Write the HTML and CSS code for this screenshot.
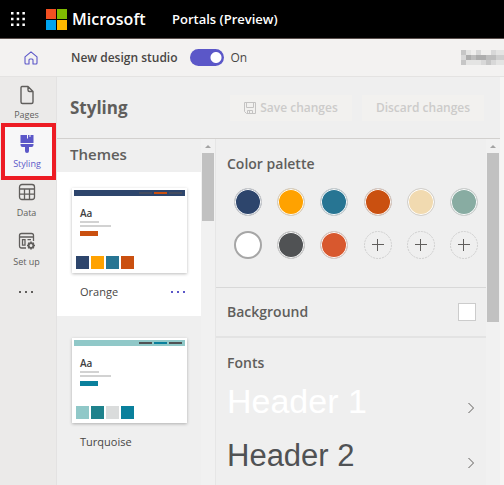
FILE: index.html
```html
<!DOCTYPE html>
<html lang="en">
<head>
<meta charset="utf-8">
<title>Portals (Preview)</title>
<link rel="stylesheet" href="styles.css">
</head>
<body>
<header class="topbar">
  <button class="waffle" aria-label="App launcher">
    <svg width="14" height="14" viewBox="0 0 14 14" fill="#fff"><path d="M0 0h2.500v2.500H0zM5.700 0h2.500v2.500H5.700zM11.400 0h2.500v2.500h-2.500zM0 5.700h2.500v2.500H0zM5.700 5.700h2.500v2.500H5.700zM11.400 5.700h2.500v2.500h-2.500zM0 11.400h2.500v2.500H0zM5.700 11.400h2.500v2.500H5.700zM11.400 11.400h2.500v2.500h-2.500z"/></svg>
  </button>
  <svg class="ms-logo" width="21" height="21" viewBox="0 0 21 21"><path fill="#f25022" d="M0 0h10v10H0z"/><path fill="#7fba00" d="M11 0h10v10H11z"/><path fill="#00a4ef" d="M0 11h10v10H0z"/><path fill="#ffb900" d="M11 11h10v10H11z"/></svg>
  <span class="brand">Microsoft</span>
  <span class="product">Portals (Preview)</span>
</header>
<div class="studiobar">
  <a class="home" href="#" aria-label="Home">
    <svg width="14" height="14" viewBox="0 0 14 14" fill="none" stroke="#5b57c8" stroke-width="1.100" stroke-linejoin="round"><path d="M1 5.800 7 .8l6 5V12q0 1-1 1H9V9q0-1-1-1H6Q5 8 5 9v4H2q-1 0-1-1z"/></svg>
  </a>
  <label class="studio-label" for="studio">New design studio</label>
  <input class="toggle" type="checkbox" role="switch" id="studio" checked>
  <span class="state">On</span>
  <svg class="environment" width="43" height="15" viewBox="0 0 43 15" shape-rendering="crispEdges"><path fill="#e4e4e3" d="M0 0h43v15H0z"/><path fill="#c6c6c6" d="M0 0h5v5H0zM0 10h5v5H0zM25 10h5v5h-5z"/><path fill="#d8d8d8" d="M0 5h5v5H0zM15 0h5v5h-5zM30 0h5v5h-5zM20 10h5v5h-5zM30 10h5v5h-5z"/><path fill="#adadad" d="M5 5h5v5H5zM15 5h10v5H15z"/><path fill="#bebebe" d="M10 5h5v5h-5zM25 5h10v5H25z"/><path fill="#cfcfcf" d="M35 5h8v5h-8z"/><path fill="#f0efee" d="M10 0h5v5h-5zM20 0h10v5H20z"/></svg>
</div>
<div class="workspace">
  <nav class="rail">
    <a class="rail-item" href="#">
      <svg width="16" height="20" viewBox="0 0 16 20" fill="none" stroke="#605e5c" stroke-width="1.400" stroke-linejoin="round"><path d="M3 1.500h6l5 5V17q0 1.500-1.500 1.500h-9Q2 18.500 2 17V3q0-1.500 1-1.500zM9 1.500V5q0 1.500 1.500 1.500H14"/></svg>
      <span>Pages</span>
    </a>
    <a class="rail-item active" href="#">
      <svg width="16" height="20" viewBox="0 0 16 20" fill="#5b57c8"><path d="M1.500 1H8v3.500h1V1h1.500v2h1V1h3v8h-13zM1.500 10h13v1q0 2-2 2H10v4q0 2-2 2t-2-2v-4H3.500q-2 0-2-2z"/></svg>
      <span>Styling</span>
    </a>
    <a class="rail-item" href="#">
      <svg width="18" height="20" viewBox="0 0 18 20" fill="none" stroke="#605e5c" stroke-width="1.300"><rect x="1.500" y="1.500" width="15" height="15" rx="2.500"/><path d="M1.500 6h15M1.500 11.200h15M6.500 6v10.500M11.500 6v10.500"/></svg>
      <span>Data</span>
    </a>
    <a class="rail-item" href="#">
      <svg width="18" height="20" viewBox="0 0 18 20" fill="none" stroke="#605e5c" stroke-width="1.300"><path d="M8 16H3.500q-2 0-2-2V3.500q0-2 2-2h10q2 0 2 2V9M1.500 5h14M4.500 7.700H7v5.500H4.500zM9.500 7.700H13"/><circle cx="13" cy="13.500" r="2.400" stroke-width="1.800"/><path stroke-width="1.600" d="M13 9.500v2M13 15.500v2M9 13.500h2M15 13.500h2M10.200 10.700l1.400 1.400M14.400 14.900l1.400 1.400M15.800 10.700l-1.400 1.400M11.600 14.900l-1.400 1.400"/></svg>
      <span>Set up</span>
    </a>
    <button class="rail-more" aria-label="More"><i></i><i></i><i></i></button>
  </nav>
  <main class="panel">
    <div class="panel-head">
      <h1>Styling</h1>
      <button class="action" disabled>
        <svg width="12" height="12" viewBox="0 0 12 12" fill="none" stroke="#c4c3c2"><path d="M.5.5h11v11h-9l-2-2zM2.500.5v5h7v-5M3.500 11.500v-3h5v3M5.500 9v2"/></svg>
        Save changes
      </button>
      <button class="action" disabled>Discard changes</button>
    </div>
    <div class="columns">
      <section class="themes">
        <div class="themes-list">
          <h2>Themes</h2>
          <article class="theme orange selected">
            <div class="preview">
              <div class="preview-nav"><i></i><i></i><i></i></div>
              <b>Aa</b>
              <div class="line short"></div>
              <div class="line"></div>
              <div class="cta"></div>
              <div class="chips"><i></i><i></i><i></i><i></i></div>
            </div>
            <div class="theme-name"><span>Orange</span><button class="theme-more" aria-label="Theme options"><i></i><i></i><i></i></button></div>
          </article>
          <article class="theme turquoise">
            <div class="preview">
              <div class="preview-nav"><i></i><i></i><i></i></div>
              <b>Aa</b>
              <div class="line short"></div>
              <div class="line"></div>
              <div class="cta"></div>
              <div class="chips"><i></i><i></i><i></i><i></i></div>
            </div>
            <div class="theme-name"><span>Turquoise</span></div>
          </article>
        </div>
        <div class="scroll"><span class="arrow"></span><span class="thumb"></span></div>
      </section>
      <section class="settings">
        <div class="settings-body">
          <div class="palette">
            <h3>Color palette</h3>
            <div class="swatches">
              <button class="swatch navy" aria-label="Navy"></button>
              <button class="swatch amber" aria-label="Amber"></button>
              <button class="swatch teal" aria-label="Teal"></button>
              <button class="swatch rust" aria-label="Rust"></button>
              <button class="swatch sand" aria-label="Sand"></button>
              <button class="swatch sage" aria-label="Sage"></button>
              <button class="swatch white" aria-label="White"></button>
              <button class="swatch slate" aria-label="Slate"></button>
              <button class="swatch coral" aria-label="Coral"></button>
              <button class="add" aria-label="Add color"><svg viewBox="0 0 28 28"><circle cx="14" cy="14" r="13.500"/><path d="M8 13.500h12M13.500 8v12"/></svg></button>
              <button class="add" aria-label="Add color"><svg viewBox="0 0 28 28"><circle cx="14" cy="14" r="13.500"/><path d="M8 13.500h12M13.500 8v12"/></svg></button>
              <button class="add" aria-label="Add color"><svg viewBox="0 0 28 28"><circle cx="14" cy="14" r="13.500"/><path d="M8 13.500h12M13.500 8v12"/></svg></button>
            </div>
          </div>
          <div class="background">
            <h3>Background</h3>
            <button class="bg-color" aria-label="Background color"></button>
          </div>
          <div class="fonts">
            <h3>Fonts</h3>
            <button class="font-row light"><span>Header 1</span><svg width="6" height="12" viewBox="0 0 6 12"><path d="M.5 1l5 5-5 5"/></svg></button>
            <button class="font-row dark"><span>Header 2</span><svg width="6" height="12" viewBox="0 0 6 12"><path d="M.5 1l5 5-5 5"/></svg></button>
          </div>
        </div>
        <div class="scroll"><span class="arrow"></span><span class="thumb long"></span></div>
      </section>
    </div>
  </main>
</div>
</body>
</html>
```
FILE: styles.css
```css
* { box-sizing: border-box; }
body {
  margin: 0;
  height: 100vh;
  display: flex;
  flex-direction: column;
  overflow: hidden;
  background: #f6f5f4;
  color: #484644;
  font: 12px/16px "Open Sans", "Noto Sans", sans-serif;
}
button { margin: 0; padding: 0; border: 0; background: none; font: inherit; color: inherit; }
a { color: inherit; text-decoration: none; }
h1, h2, h3 { margin: 0; font-weight: 600; color: #605e5c; }
svg { display: block; }

.topbar {
  display: flex;
  align-items: center;
  flex: none;
  height: 39px;
  padding-left: 11px;
  background: #000;
  border-bottom: 1px solid #5a4f4c;
  color: #fff;
}
.ms-logo { margin-left: 21px; }
.brand { width: 100px; margin-left: 5px; font-size: 16px; line-height: 24px; font-weight: 600; }
.product { font-weight: 600; font-size: 13px; }

.studiobar {
  display: flex;
  align-items: center;
  flex: none;
  height: 38px;
  padding-left: 24px;
  background: #f3f2f1;
  border-bottom: 1px solid #e4e3e2;
}
.studio-label { margin-left: 33px; font-weight: 600; }
.toggle {
  appearance: none;
  width: 34px;
  height: 17px;
  margin: 0 7px 0 12px;
  border-radius: 9px;
  background: radial-gradient(circle at 26px 50%, #fff 5px, transparent 6px) #5b57c8;
}
.environment { margin-left: auto; }

.workspace { flex: 1; min-height: 0; display: flex; }
.rail {
  width: 57px;
  flex: none;
  background: #ebeae9;
  border-right: 1px solid #e3e2e2;
}
.rail-item {
  display: flex;
  flex-direction: column;
  align-items: center;
  gap: 2px;
  height: 49px;
  padding: 8px 3px 0 0;
  font-size: 9px;
  line-height: 16px;
  color: #605e5c;
}
.rail-item.active {
  height: 57px;
  margin: -3px 0 -5px 1px;
  padding-top: 7px;
  border: 4px solid #ed1c24;
  background: #f7f7f8;
  color: #5b57c8;
}
.rail-more { display: flex; gap: 4px; margin: 18px 0 0 19px; }
.rail-more i { width: 2px; height: 2px; background: #605e5c; }

.panel {
  flex: 1;
  min-width: 0;
  display: flex;
  flex-direction: column;
  margin-right: 4px;
  background: #efefef;
}
.panel-head {
  display: flex;
  align-items: center;
  flex: none;
  height: 62px;
  padding: 0 16px 0 13px;
  border-bottom: 1px solid #d2d0ce;
}
.panel-head h1 { margin-right: auto; font-size: 17px; font-weight: 700; line-height: 24px; }
.action {
  display: flex;
  align-items: center;
  justify-content: center;
  gap: 4px;
  width: 122px;
  height: 26px;
  margin-left: 10px;
  background: #f2f1ef;
  color: #cccbca;
  font-weight: 600;
}

.columns { flex: 1; min-height: 0; display: flex; }
.themes { display: flex; width: 159px; flex: none; border-right: 1px solid #e6e6e6; }
.themes-list { flex: 1; overflow: hidden; }
.themes h2 { height: 33px; padding: 4px 13px 0; font-size: 15px; line-height: 22px; }
.theme { height: 144px; padding: 16px 14px 0 15px; }
.theme + .theme { padding-top: 22px; }
.selected { background: #fff; }
.preview {
  height: 85px;
  padding: 2px;
  background: #fff;
  box-shadow: 0 1px 3px #0004;
}
.preview-nav {
  display: flex;
  align-items: center;
  justify-content: flex-end;
  gap: 2px;
  height: 6px;
  padding-right: 3px;
}
.preview-nav i { width: 13px; height: 2px; background: #505254; }
.preview b { display: block; margin: 10px 0 1px 6px; font-size: 10px; line-height: 14px; font-weight: 600; color: #404040; }
.line { width: 31px; height: 2px; margin: 0 0 2px 6px; background: #d2d2d2; }
.line.short { width: 19px; }
.cta { width: 18px; height: 5px; margin: 4px 0 0 6px; }
.chips { display: flex; gap: 2px; margin: 20px 0 0 2px; }
.chips i { width: 13px; height: 13px; }
.orange .preview-nav, .orange .chips i:nth-child(1) { background: #2d456c; }
.orange .preview-nav i { background: #434c60; }
.orange .chips i:nth-child(2) { background: #ffa200; }
.orange .chips i:nth-child(3) { background: #277593; }
.orange .cta, .orange .chips i:nth-child(4), .orange .preview-nav i:nth-child(2) { background: #ca5010; }
.turquoise .preview-nav, .turquoise .chips i:nth-child(1) { background: #90c8c8; }
.turquoise .chips i:nth-child(2) { background: #1e828c; }
.turquoise .chips i:nth-child(3) { background: #dadcdc; }
.turquoise .cta, .turquoise .chips i:nth-child(4), .turquoise .preview-nav i:nth-child(2) { background: #0a809c; }
.theme-name {
  display: flex;
  justify-content: space-between;
  align-items: center;
  padding: 11px 2px 0 8px;
  font-size: 11px;
}
.theme-more { display: flex; gap: 4px; }
.theme-more i { width: 2px; height: 2px; background: #5b57c8; }

.scroll {
  display: flex;
  flex-direction: column;
  align-items: center;
  width: 14px;
  flex: none;
  padding-top: 6px;
  background: #f1f1f1;
}
.arrow { border: 3px solid transparent; border-top: 0; border-bottom: 3px solid #a3a3a3; }
.thumb { width: 12px; height: 68px; margin-top: 5px; background: #c1c1c1; }
.thumb.long { height: 169px; }

.settings { flex: 1; min-width: 0; display: flex; }
.settings-body { flex: 1; min-width: 0; }
.settings h3 { font-size: 14px; line-height: 20px; }
.palette { height: 149px; padding: 15px 8px 0 11px; border-bottom: 1px solid #d8d8d8; }
.swatches {
  display: grid;
  grid-template-columns: repeat(6, 28px);
  justify-content: space-between;
  row-gap: 15px;
  padding: 14px 0 0 7px;
}
.swatch { width: 28px; height: 28px; border: 1px solid #d0d0d0; border-radius: 50%; box-shadow: inset 0 0 0 1px #fff; }
.navy { background: #2d456c; }
.amber { background: #ffa200; }
.teal { background: #277593; }
.rust { background: #ca5010; }
.sand { background: #f1dab0; }
.sage { background: #88aca2; }
.white { background: #fff; border: 2px solid #a6a6a6; }
.slate { background: #505254; }
.coral { background: #d8582e; }
.add { width: 28px; height: 28px; }
.add svg { fill: none; stroke: #605e5c; }
.add circle { stroke: #cfcfcf; stroke-dasharray: 2 1; }
.background {
  display: flex;
  align-items: center;
  justify-content: space-between;
  height: 50px;
  padding: 0 10px 0 11px;
  border-bottom: 2px solid #e3e3e3;
}
.bg-color { width: 18px; height: 18px; border: 1px solid #ccc; background: #fff; }
.fonts { padding: 15px 12px 0 11px; }
.font-row {
  display: flex;
  justify-content: space-between;
  align-items: center;
  width: 100%;
  height: 55px;
  font-family: "Liberation Sans", sans-serif;
  line-height: 36px;
}
.font-row svg { fill: none; stroke: #605e5c; margin-top: 14px; }
.light { color: #fff; font-size: 34px; }
.dark { color: #505254; font-size: 31px; }
```
